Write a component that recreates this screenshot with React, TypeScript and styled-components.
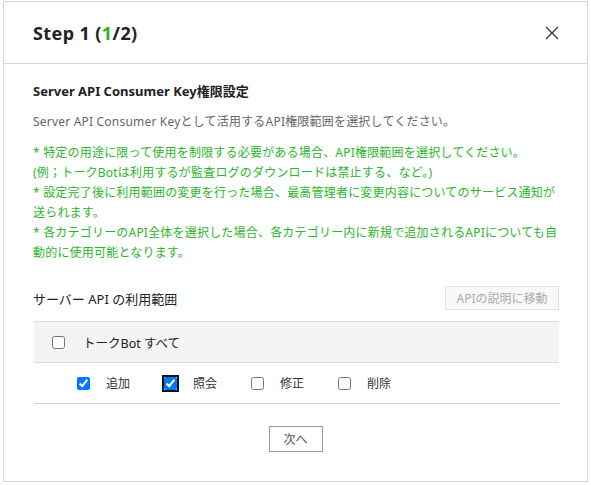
import React, { useState } from "react";
import styled, { createGlobalStyle } from "styled-components";

const GlobalStyle = createGlobalStyle`
  body {
    margin: 0;
    background: #fff;
    font-family: "Noto Sans", "Noto Sans CJK JP", sans-serif;
  }
`;

const Page = styled.div`
  padding: 1px 4px 0 3px;
`;

const Modal = styled.div`
  width: 585px;
  height: 481px;
  box-sizing: border-box;
  border: 1px solid #d6d6d6;
  background: #fff;
  display: flex;
  flex-direction: column;
`;

const Header = styled.div`
  height: 62px;
  box-sizing: border-box;
  border-bottom: 1px solid #d6d6d6;
  display: flex;
  align-items: center;
  justify-content: space-between;
  padding: 0 28px 0 29px;
`;

const Title = styled.h1`
  margin: 0;
  font-size: 18px;
  letter-spacing: 0.4px;
  font-weight: 700;
  color: #222;
`;

const Green = styled.span`
  color: #2bb52b;
`;

const CloseButton = styled.button`
  border: 0;
  background: none;
  padding: 0;
  width: 14px;
  height: 14px;
  display: flex;
  cursor: pointer;
`;

const Body = styled.div`
  flex: 1;
  padding: 17px 28px 0 30px;
  display: flex;
  flex-direction: column;
`;

const SubTitle = styled.h2`
  margin: 0 0 0 -1px;
  font-size: 13px;
  line-height: 20px;
  font-weight: 700;
  color: #222;
`;

const Desc = styled.p`
  margin: 12px 0 0 -1px;
  font-size: 12px;
  line-height: 18px;
  letter-spacing: 0.2px;
  color: #666;
`;

const Notice = styled.p`
  margin: 12px 0 0 -1px;
  font-size: 12px;
  line-height: 20px;
  letter-spacing: 0.2px;
  color: #2bb52b;
  white-space: nowrap;
`;

const SectionRow = styled.div`
  margin-top: 23px;
  display: flex;
  align-items: center;
  justify-content: space-between;
`;

const SectionLabel = styled.span`
  margin-left: -1px;
  font-size: 13px;
  color: #222;
`;

const GhostButton = styled.button`
  width: 114px;
  height: 24px;
  border: 1px solid #e0e0e0;
  background: #f9f9f9;
  color: #aaa;
  font-family: inherit;
  font-size: 12px;
  padding: 0;
`;

const Table = styled.div`
  margin-top: 11px;
  border-top: 1px solid #dcdcdc;
`;

const HeadRow = styled.label`
  height: 40px;
  background: #f4f4f4;
  border-bottom: 1px solid #dcdcdc;
  display: flex;
  align-items: center;
  gap: 18px;
  padding-left: 18px;
  font-size: 12.5px;
  color: #222;
`;

const PermRow = styled.div`
  height: 40px;
  border-bottom: 1px solid #d0d0d0;
  display: flex;
  align-items: center;
  padding-left: 43px;
`;

const Perm = styled.label`
  width: 87px;
  display: flex;
  align-items: center;
  gap: 16px;
  font-size: 12px;
  color: #333;
`;

const Check = styled.input<{ $focused?: boolean }>`
  width: 13px;
  height: 13px;
  margin: 0;
  flex: none;
  ${(p) =>
    p.$focused &&
    `
    outline: 2px solid #101010;
    outline-offset: 0;
    border-radius: 3px;
  `}
`;

const Footer = styled.div`
  display: flex;
  justify-content: center;
  padding: 22px 0 29px;
`;

const NextButton = styled.button`
  width: 54px;
  height: 26px;
  border: 1px solid #9a9a9a;
  background: #fff;
  color: #555;
  font-family: inherit;
  font-size: 12px;
  padding: 0;
`;

const CloseIcon = () => (
  <svg width="14" height="14" viewBox="0 0 14 14">
    <path d="M1 1 L13 13 M13 1 L1 13" stroke="#333" strokeWidth="1.3" fill="none" />
  </svg>
);

const perms = [
  { name: "追加", on: true },
  { name: "照会", on: true, focus: true },
  { name: "修正", on: false },
  { name: "削除", on: false },
];

const App = () => {
  const [checked, setChecked] = useState(perms.map((p) => p.on));
  const all = checked.every(Boolean);

  return (
    <Page>
      <GlobalStyle />
      <Modal>
        <Header>
          <Title>
            Step 1 (<Green>1</Green>/2)
          </Title>
          <CloseButton aria-label="close">
            <CloseIcon />
          </CloseButton>
        </Header>
        <Body>
          <SubTitle>Server API Consumer Key権限設定</SubTitle>
          <Desc>Server API Consumer Keyとして活用するAPI権限範囲を選択してください。</Desc>
          <Notice>
            * 特定の用途に限って使用を制限する必要がある場合、API権限範囲を選択してください。
            <br />
            (例；トークBotは利用するが監査ログのダウンロードは禁止する、など。)
            <br />
            * 設定完了後に利用範囲の変更を行った場合、最高管理者に変更内容についてのサービス通知が
            <br />
            送られます。
            <br />
            * 各カテゴリーのAPI全体を選択した場合、各カテゴリー内に新規で追加されるAPIについても自
            <br />
            動的に使用可能となります。
          </Notice>
          <SectionRow>
            <SectionLabel>サーバー API の利用範囲</SectionLabel>
            <GhostButton>APIの説明に移動</GhostButton>
          </SectionRow>
          <Table>
            <HeadRow>
              <Check
                type="checkbox"
                checked={all}
                onChange={() => setChecked(checked.map(() => !all))}
              />
              トークBot すべて
            </HeadRow>
            <PermRow>
              {perms.map((p, i) => (
                <Perm key={p.name}>
                  <Check
                    type="checkbox"
                    $focused={p.focus}
                    checked={checked[i]}
                    onChange={() =>
                      setChecked(checked.map((c, j) => (j === i ? !c : c)))
                    }
                  />
                  {p.name}
                </Perm>
              ))}
            </PermRow>
          </Table>
        </Body>
        <Footer>
          <NextButton>次へ</NextButton>
        </Footer>
      </Modal>
    </Page>
  );
};

export default App;
